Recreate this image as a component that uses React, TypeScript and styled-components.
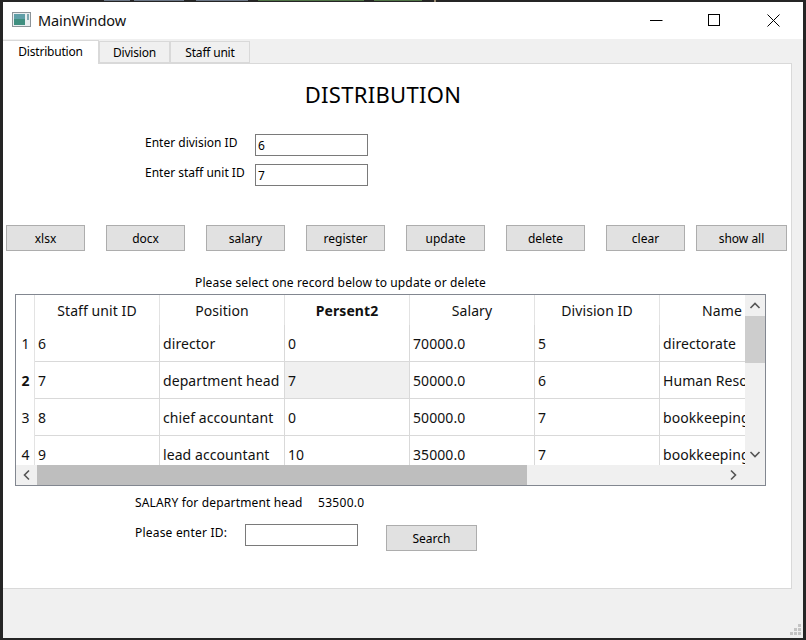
import React from "react";
import styled, { createGlobalStyle } from "styled-components";

const Global = createGlobalStyle`
  html, body { margin: 0; padding: 0; background: #252525; }
  * { box-sizing: border-box; }
  body { font-family: "Noto Sans", "Open Sans", sans-serif; font-size: 12px; color: #000; }
`;

const Desktop = styled.div`
  width: 806px; height: 640px; padding: 2px 3px; overflow: hidden; background: #252525; position: relative;
`;
const BackdropCode = styled.svg`position: absolute; left: 0; top: 0; width: 806px; height: 2px;`;
const Win = styled.div`
  width: 800px; height: 636px; display: flex; flex-direction: column; background: #f0f0f0; position: relative;
`;
const TitleBar = styled.div`
  height: 37px; flex: none; background: #fff; display: flex; align-items: center; padding: 0 1px 2px 9px;
`;
const AppIcon = styled.svg`width: 19px; height: 15px; flex: none;`;
const TitleText = styled.span`
  margin-left: 7px; font-size: 14.5px; color: #111; flex: 1; letter-spacing: -0.1px;
`;
const WinBtn = styled.div<{ $w: number }>`
  width: ${p => p.$w}px; height: 37px; display: flex; align-items: center; justify-content: center; padding-top: 1px;
`;
const Tabs = styled.div`
  height: 24px; flex: none; display: flex; align-items: flex-end; position: relative; z-index: 1;
`;
const Tab = styled.div<{ $active?: boolean; $w: number }>`
  width: ${p => p.$w}px;
  height: ${p => (p.$active ? 24 : 22)}px;
  margin-bottom: ${p => (p.$active ? -1 : 0)}px;
  background: ${p => (p.$active ? "#fff" : "#f0f0f0")};
  border: 1px solid #d9d9d9;
  border-bottom: ${p => (p.$active ? "none" : "1px solid #d9d9d9")};
  border-left: ${p => (p.$active ? "none" : "1px solid #d9d9d9")};
  display: flex; align-items: center; justify-content: center;
  font-size: 12px; padding-bottom: ${p => (p.$active ? 3 : 0)}px; letter-spacing: -0.2px;
`;
const Pane = styled.div`
  width: 789px; height: 526px; flex: none; background: #fff; border: 1px solid #d9d9d9; border-left: none;
  padding: 0 0 0 3px; display: flex; flex-direction: column;
`;
const Heading = styled.div`
  margin-top: 15px; height: 30px; line-height: 30px; text-align: center; font-size: 22px; width: 754px; color: #000;
  letter-spacing: 0.3px;
`;
const Form = styled.div`
  margin: 25px 0 0 139px; display: grid; grid-template-columns: 110px 113px; row-gap: 8px;
`;
const FieldLabel = styled.label`
  height: 22px; font-size: 12px; line-height: 17px; letter-spacing: 0;
`;
const Field = styled.div`
  height: 22px; border: 1px solid #7a7a7a; background: #fff; padding-left: 2px; font-size: 12px; line-height: 21px;
  width: 113px;
`;
const Buttons = styled.div`
  margin-top: 39px; display: flex;
`;
const Btn = styled.div<{ $w?: number; $gap?: number }>`
  width: ${p => p.$w ?? 79}px; height: 26px; flex: none; margin-right: ${p => p.$gap ?? 21}px;
  background: #e1e1e1; border: 1px solid #adadad; display: flex; align-items: center; justify-content: center;
  font-size: 12px;
`;
const Note = styled.div`
  margin: 23px 0 0 189px; height: 18px; line-height: 18px; font-size: 12px; letter-spacing: 0.13px;
`;
const Table = styled.div`
  margin: 2px 0 0 9px; width: 751px; height: 192px; border: 1px solid #828790; position: relative; overflow: hidden; background: #fff;
`;
const Grid = styled.div`
  display: grid; grid-template-columns: 19px repeat(6, 125px); grid-template-rows: 30px repeat(4, 37px);
  font-size: 14px; color: #111; letter-spacing: 0.08px;
`;
const Corner = styled.div`border-right: 1px solid #e3e3e3;`;
const Head = styled.div`
  display: flex; align-items: center; justify-content: center; border-right: 1px solid #e3e3e3;
  height: 30px; white-space: nowrap; overflow: hidden;
`;
const HeadBold = styled(Head)`font-weight: 700;`;
const RowNo = styled.div<{ $b?: boolean }>`
  display: flex; align-items: center; justify-content: center; font-weight: ${p => (p.$b ? 700 : 400)};
  border-right: 1px solid #e3e3e3; padding-left: 1px;
`;
const Cell = styled.div<{ $sel?: boolean }>`
  display: flex; align-items: center; padding: 0 0 0 3px; white-space: nowrap; overflow: hidden;
  border-right: 1px solid #d9d9d9; border-bottom: 1px solid #d9d9d9;
  background: ${p => (p.$sel ? "#f0f0f0" : "#fff")};
`;
const VBar = styled.div`
  position: absolute; top: 0; right: 0; width: 20px; height: 170px; background: #f0f0f0;
`;
const VThumb = styled.div`
  position: absolute; top: 21px; left: 0; width: 20px; height: 47px; background: #cdcdcd;
`;
const HBar = styled.div`
  position: absolute; left: 0; bottom: 0; width: 749px; height: 20px; background: #f0f0f0;
`;
const HThumb = styled.div`
  position: absolute; left: 21px; top: 0; width: 490px; height: 20px; background: #bebebe;
`;
const Arrow = styled.svg<{ $pos: string }>`
  position: absolute; width: 12px; height: 12px; ${p => p.$pos}
`;
const Salary = styled.div`
  margin: 8px 0 0 129px; height: 18px; line-height: 18px; display: flex; font-size: 12px;
`;
const SalaryLabel = styled.span`width: 183px; letter-spacing: 0.15px;`;
const SalaryValue = styled.span`letter-spacing: 0.3px;`;
const Search = styled.div`
  margin: 12px 0 0 129px; display: flex; align-items: flex-start;
`;
const SearchLabel = styled.span`width: 110px; line-height: 17px; letter-spacing: 0.2px;`;
const SearchBtn = styled(Btn)`margin: 1px 0 0 28px; width: 91px;`;
const Grip = styled.svg`position: absolute; right: 1px; bottom: 1px; width: 13px; height: 13px;`;

const rows = [
  ["6", "director", "0", "70000.0", "5", "directorate"],
  ["7", "department head", "7", "50000.0", "6", "Human Resources"],
  ["8", "chief accountant", "0", "50000.0", "7", "bookkeeping"],
  ["9", "lead accountant", "10", "35000.0", "7", "bookkeeping"],
];
const buttons = ["xlsx", "docx", "salary", "register", "update", "delete", "clear"];

export default function App() {
  return (
    <Desktop>
      <Global />
      <BackdropCode viewBox="0 0 806 2">
        <g fill="#8a9bb0" opacity="0.7">
          <rect x="104" y="0" width="26" height="1" /><rect x="134" y="0" width="50" height="1" /><rect x="196" y="0" width="52" height="1" />
        </g>
        <g fill="#5d8a50" opacity="0.8">
          <rect x="258" y="0" width="106" height="1" /><rect x="374" y="0" width="48" height="1" />
        </g>
        <rect x="434" y="0" width="2" height="2" fill="#9a8a70" />
      </BackdropCode>
      <Win>
        <TitleBar>
          <AppIcon viewBox="0 0 19 15">
            <rect x="0.5" y="0.5" width="18" height="14" fill="#e8eef0" stroke="#8c9499" />
            <rect x="2" y="2" width="11" height="11" fill="#3f8f80" />
            <rect x="2" y="2" width="11" height="5" fill="#5f9fa8" />
            <rect x="15" y="2" width="2" height="6" fill="#7fa8b0" />
          </AppIcon>
          <TitleText>MainWindow</TitleText>
          <WinBtn $w={56}>
            <svg width="13" height="13" viewBox="0 0 13 13"><path d="M0 6.5H12.5" stroke="#000" strokeWidth="1" /></svg>
          </WinBtn>
          <WinBtn $w={60}>
            <svg width="13" height="13" viewBox="0 0 13 13"><rect x="0.5" y="0.5" width="11" height="11" fill="none" stroke="#000" /></svg>
          </WinBtn>
          <WinBtn $w={58}>
            <svg width="13" height="13" viewBox="0 0 13 13"><path d="M0.5 0.5L12.5 12.5M12.5 0.5L0.5 12.5" stroke="#000" /></svg>
          </WinBtn>
        </TitleBar>
        <Tabs>
          <Tab $active $w={96}>Distribution</Tab>
          <Tab $w={71}>Division</Tab>
          <Tab $w={80}>Staff unit</Tab>
        </Tabs>
        <Pane>
          <Heading>DISTRIBUTION</Heading>
          <Form>
            <FieldLabel>Enter division ID</FieldLabel>
            <Field>6</Field>
            <FieldLabel>Enter staff unit ID</FieldLabel>
            <Field>7</Field>
          </Form>
          <Buttons>
            {buttons.map(b => <Btn key={b} $gap={b === "clear" ? 11 : 21}>{b}</Btn>)}
            <Btn $w={91} $gap={0}>show all</Btn>
          </Buttons>
          <Note>Please select one record below to update or delete</Note>
          <Table>
            <Grid>
              <Corner />
              <Head>Staff unit ID</Head>
              <Head>Position</Head>
              <HeadBold>Persent2</HeadBold>
              <Head>Salary</Head>
              <Head>Division ID</Head>
              <Head>Name</Head>
              {rows.map((r, i) => (
                <React.Fragment key={r[0]}>
                  <RowNo $b={i === 1}>{i + 1}</RowNo>
                  {r.map((c, j) => <Cell key={j} $sel={i === 1 && j === 2}>{c}</Cell>)}
                </React.Fragment>
              ))}
            </Grid>
            <VBar>
              <VThumb />
              <Arrow $pos="top: 5px; left: 4px;" viewBox="0 0 12 12"><path d="M1.5 8L6 3.5L10.5 8" fill="none" stroke="#555" strokeWidth="1.6" /></Arrow>
              <Arrow $pos="bottom: 5px; left: 4px;" viewBox="0 0 12 12"><path d="M1.5 4L6 8.5L10.5 4" fill="none" stroke="#555" strokeWidth="1.6" /></Arrow>
            </VBar>
            <HBar>
              <HThumb />
              <Arrow $pos="top: 4px; left: 5px;" viewBox="0 0 12 12"><path d="M8 1.5L3.5 6L8 10.5" fill="none" stroke="#555" strokeWidth="1.6" /></Arrow>
              <Arrow $pos="top: 4px; right: 26px;" viewBox="0 0 12 12"><path d="M4 1.5L8.5 6L4 10.5" fill="none" stroke="#555" strokeWidth="1.6" /></Arrow>
            </HBar>
          </Table>
          <Salary><SalaryLabel>SALARY for department head</SalaryLabel><SalaryValue>53500.0</SalaryValue></Salary>
          <Search>
            <SearchLabel>Please enter ID:</SearchLabel>
            <Field />
            <SearchBtn>Search</SearchBtn>
          </Search>
        </Pane>
        <Grip viewBox="0 0 13 13">
          <g fill="#c4c4c4">
            <rect x="9" y="0" width="3" height="3" />
            <rect x="5" y="4" width="3" height="3" /><rect x="9" y="4" width="3" height="3" />
            <rect x="1" y="8" width="3" height="3" /><rect x="5" y="8" width="3" height="3" /><rect x="9" y="8" width="3" height="3" />
          </g>
        </Grip>
      </Win>
    </Desktop>
  );
}
